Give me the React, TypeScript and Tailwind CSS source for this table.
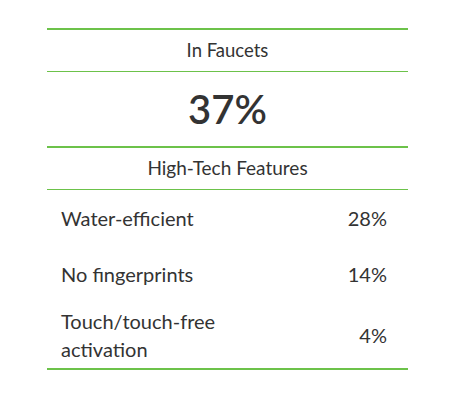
const rows = [
  { label: "Water-efficient", value: "28%" },
  { label: "No fingerprints", value: "14%" },
  { label: "Touch/touch-free activation", value: "4%" },
];

export default function App() {
  return (
    <div className="w-[463px] h-[405px] bg-white pt-[28px] pl-[47px] font-['Lato',sans-serif] text-[#333]">
      <div className="w-[361px] border-t-2 border-t-[#6cc24a] border-b-2 border-b-[#6cc24a]">
        <div className="h-[42px] flex items-center justify-center border-b border-b-[#6cc24a] text-[18.5px]">
          In Faucets
        </div>
        <div className="h-[76px] flex items-center justify-center border-b-2 border-b-[#6cc24a] text-[40px] font-semibold leading-none">
          37%
        </div>
        <div className="h-[42px] flex items-center justify-center border-b border-b-[#6cc24a] text-[19px]">
          High-Tech Features
        </div>
        {rows.map((r, i) => (
          <div
            key={r.label}
            className={`flex items-center pl-[14px] text-[20px] leading-[28px] ${i === 2 ? "h-[66px]" : "h-[56px]"}`}
          >
            <div className="w-[180px]">{r.label}</div>
            <div className="flex-1 text-right pr-[21px]">{r.value}</div>
          </div>
        ))}
      </div>
    </div>
  );
}
